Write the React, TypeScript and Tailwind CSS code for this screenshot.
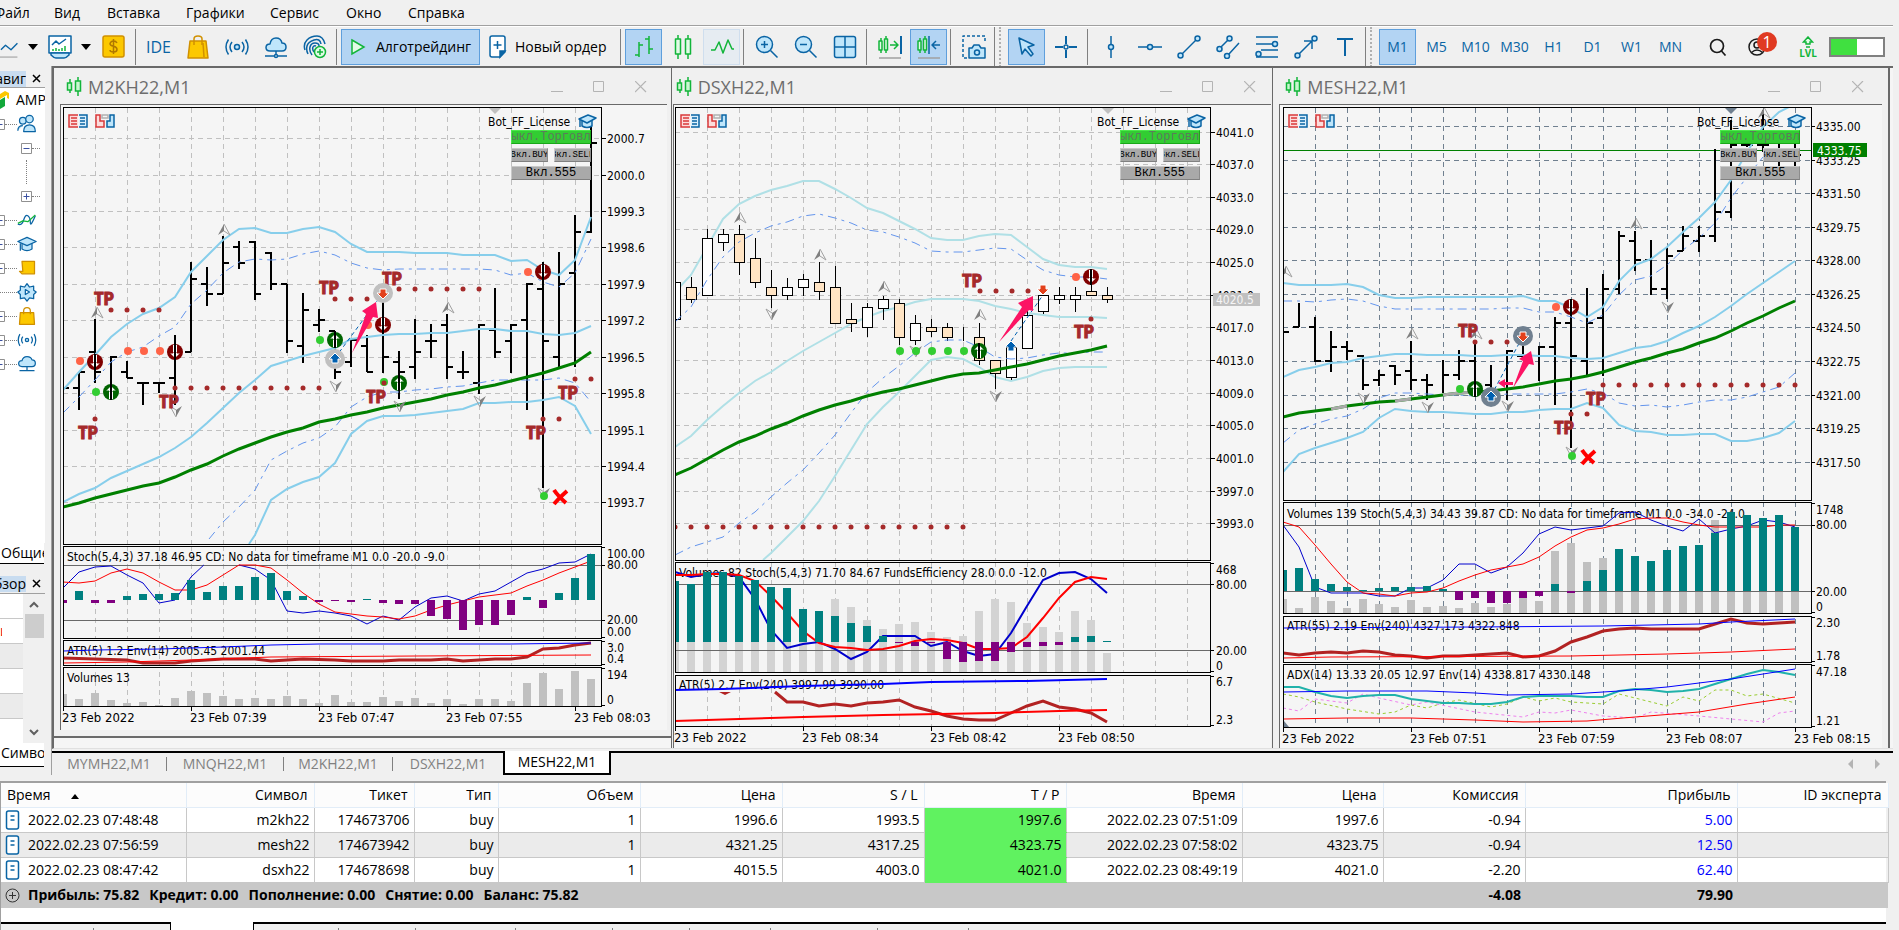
import React from 'react';

const STEP = 16;

type Bar = [i: number, high: number, low: number, open: number | null, close: number | null];
type Candle = [i: number, high: number, low: number, top: number, bottom: number, up: 0 | 1];
type Point = [number, number];

const trace = (x0: number, ys: number[], from = 0) =>
  ys.map((y, k) => `${x0 + (from + k) * STEP},${y}`).join(' ');

const pairs = (x0: number, pts: Point[]) => pts.map(([i, y]) => `${x0 + i * STEP},${y}`).join(' ');

const range = (from: number, to: number, step: number) => {
  const out: number[] = [];
  for (let v = from; v <= to; v += step) out.push(v);
  return out;
};

const chartFont = "font-['DejaVu_Sans_Condensed','Noto_Sans',sans-serif]";

/* ---------- chart primitives ---------- */

const Line = ({ points, color, width = 1, dash }: { points: string; color: string; width?: number; dash?: string }) => (
  <polyline points={points} fill="none" stroke={color} strokeWidth={width} strokeDasharray={dash} />
);

const Panel = ({ x, right, top, bottom }: { x: number; right: number; top: number; bottom: number }) => (
  <rect x={x} y={top} width={right - x} height={bottom - top} fill="none" stroke="#000" shapeRendering="crispEdges" />
);

const Grid = ({ xs, ys = [], left, right, top, bottom, color }: { xs: number[]; ys?: number[]; left: number; right: number; top: number; bottom: number; color: string }) => (
  <g stroke={color} strokeDasharray="5 4" shapeRendering="crispEdges">
    {xs.map((x) => <path key={x} d={`M${x} ${top}V${bottom}`} />)}
    {ys.map((y) => <path key={y} d={`M${left} ${y}H${right}`} />)}
  </g>
);

const Label = ({ x, y, fill = '#000', size = 12, children }: { x: number; y: number; fill?: string; size?: number; children: React.ReactNode }) => (
  <text x={x} y={y} fill={fill} fontSize={size}>{children}</text>
);

const PriceScale = ({ x, ys, labels }: { x: number; ys: number[]; labels: string[] }) => (
  <g>
    {ys.map((y, k) => (
      <g key={y}>
        <path d={`M${x} ${y}h4`} stroke="#000" shapeRendering="crispEdges" />
        <Label x={x + 5} y={y + 5}>{labels[k]}</Label>
      </g>
    ))}
  </g>
);

const TimeScale = ({ y, labels }: { y: number; labels: [number, string][] }) => (
  <g>
    {labels.map(([x, t]) => (
      <g key={t}>
        <path d={`M${x} ${y}v5`} stroke="#000" shapeRendering="crispEdges" />
        <Label x={x - 1} y={y + 16} size={13}>{t}</Label>
      </g>
    ))}
  </g>
);

const Bars = ({ x0, data }: { x0: number; data: Bar[] }) => (
  <g stroke="#000" strokeWidth="2" shapeRendering="crispEdges">
    {data.map(([i, h, l, o, c]) => {
      const x = x0 + i * STEP;
      return <path key={i} d={`M${x} ${h}V${l}${o ? `M${x} ${o}h-6` : ''}${c ? `M${x} ${c}h6` : ''}`} />;
    })}
  </g>
);

const Candles = ({ x0, data }: { x0: number; data: Candle[] }) => (
  <g stroke="#000" shapeRendering="crispEdges">
    {data.map(([i, h, l, t, b, up]) => (
      <g key={i}>
        <path d={`M${x0 + i * STEP} ${h}V${l}`} />
        <rect x={x0 + i * STEP - 5} y={t} width="10" height={b - t} fill={up ? '#fff' : '#ffe4c4'} />
      </g>
    ))}
  </g>
);

const Histogram = ({ x0, zero, ys }: { x0: number; zero: number; ys: number[] }) => (
  <g>
    {ys.map((y, i) => (
      <rect key={i} x={x0 + i * STEP - 4} y={Math.min(y, zero)} width="8" height={Math.max(1, Math.abs(y - zero))} fill={y < zero ? '#008080' : '#800080'} />
    ))}
  </g>
);

const Volumes = ({ x0, base, ys, color }: { x0: number; base: number; ys: number[]; color: string }) => (
  <g fill={color}>
    {ys.map((y, i) => <rect key={i} x={x0 + i * STEP - 4} y={y} width="8" height={base - y} />)}
  </g>
);

const Dots = ({ at, color, r }: { at: Point[]; color: string; r: number }) => (
  <g fill={color}>
    {at.map(([x, y]) => <circle key={`${x}-${y}`} cx={x} cy={y} r={r} />)}
  </g>
);

const dotRow = (from: number, to: number, y: number): Point[] => range(from, to, STEP).map((x) => [x, y]);

const FractalUp = ({ at }: { at: Point[] }) => (
  <g>
    {at.map(([x, y]) => (
      <g key={`${x}-${y}`}>
        <path d={`M${x} ${y - 5}L${x - 6} ${y + 6}L${x} ${y + 2}Z`} fill="#808080" />
        <path d={`M${x} ${y - 5}L${x + 6} ${y + 6}L${x} ${y + 2}`} fill="none" stroke="#a0a0a0" />
      </g>
    ))}
  </g>
);

const FractalDown = ({ at }: { at: Point[] }) => (
  <g>
    {at.map(([x, y]) => (
      <g key={`${x}-${y}`}>
        <path d={`M${x} ${y + 5}L${x + 6} ${y - 6}L${x} ${y - 2}Z`} fill="#808080" />
        <path d={`M${x} ${y + 5}L${x - 6} ${y - 6}L${x} ${y - 2}`} fill="none" stroke="#a0a0a0" />
      </g>
    ))}
  </g>
);

const Signal = ({ x, y, sell }: { x: number; y: number; sell?: boolean }) => (
  <g>
    <circle cx={x} cy={y} r="8" fill={sell ? '#800000' : '#006400'} />
    <path
      d={sell ? `M${x - 2} ${y - 7}v8h-3l5 5l5-5h-3v-8Z` : `M${x - 2} ${y + 7}v-8h-3l5-5l5 5h-3v8Z`}
      fill="#fff"
    />
    <path d={`M${x} ${y - 8}V${y + 8}`} stroke="#000" strokeWidth="2" />
    <path
      d={sell ? `M${x - 5} ${y + 1}h3v-1M${x + 5} ${y + 1}h-3v-1` : `M${x - 5} ${y - 1}h3v1M${x + 5} ${y - 1}h-3v1`}
      stroke={sell ? '#800000' : '#006400'}
      fill="none"
    />
  </g>
);

const Deal = ({ x, y, sell, ring }: { x: number; y: number; sell?: boolean; ring?: string }) => (
  <g>
    {ring && <circle cx={x} cy={y} r="10" fill={ring} />}
    <path
      d={sell ? `M${x} ${y + 6}L${x - 6} ${y}h3v-4h6v4h3Z` : `M${x} ${y - 6}L${x - 6} ${y}h3v4h6v-4h3Z`}
      fill={sell ? '#e2401b' : '#0060b0'}
      stroke="#fff"
    />
  </g>
);

const TakeProfit = ({ at }: { at: Point[] }) => (
  <g className="font-['Roboto_Condensed','Liberation_Sans_Narrow','Open_Sans_Condensed',Roboto,sans-serif]" fill="#a52a2a" stroke="#a52a2a" fontSize="18" fontWeight="700">
    {at.map(([x, y]) => <text key={`${x}-${y}`} x={x - 1} y={y}>TP</text>)}
  </g>
);

const Cross = ({ x, y }: { x: number; y: number }) => (
  <path d={`M${x - 6} ${y - 7}Q${x - 2} ${y - 1} ${x + 6} ${y + 6}M${x + 7} ${y - 6}Q${x} ${y} ${x - 6} ${y + 7}`} stroke="#f00" strokeWidth="4" fill="none" />
);

const CapIcon = ({ x, y }: { x: number; y: number }) => (
  <g transform={`translate(${x} ${y})`} stroke="#0a64a4" fill="#bfe6fb" strokeWidth="1.5" strokeLinejoin="round">
    <path d="M-5 -1v6q5 3 10 0v-6" />
    <path d="M-8 -2L1 -6l8 3l-9 5Z" />
    <path d="M-7 -1v7" />
  </g>
);

const ChartTools = ({ x }: { x: number }) => (
  <g fill="none" strokeWidth="1.5">
    <path d={`M${x + 9} 115h-9v12h9`} stroke="#d9383a" fill="#fcdcdc" />
    <path d={`M${x + 2} 118h6m-6 3h6m-6 3h6`} stroke="#d9383a" />
    <path d={`M${x + 10} 115h8v12h-8`} stroke="#0a64a4" fill="#dcf0fc" />
    <path d={`M${x + 11} 118h5m-5 3h5m-5 3h5`} stroke="#0a64a4" />
    <path d={`M${x + 27} 115h4v6h4v6h-8Z`} stroke="#d9383a" fill="#fcdcdc" />
    <path d={`M${x + 45} 115h-4v6h-3v6h7Z`} stroke="#0a64a4" fill="#bfe6fb" />
    <path d={`M${x + 33} 118v-3h6v3Z`} stroke="#b0b0b0" />
  </g>
);

const Headline = ({ x }: { x: number }) => (
  <g>
    <Label x={x} y={126}>Bot_FF_License</Label>
    <CapIcon x={x + 99} y={121} />
  </g>
);

/* ---------- M2KH22 ---------- */

const m2kBars: Bar[] = [
  [1, 372, 410, 388, 372], [2, 319, 383, 352, 372], [3, 356, 399, null, 357], [4, 361, 378, 372, 378],
  [5, 383, 405, 383, 383], [6, 383, 393, 383, 383], [7, 335, 405, 378, 352], [8, 262, 352, 352, 279],
  [9, 267, 306, 284, 294], [10, 236, 294, 294, 263], [11, 241, 269, 247, 263], [12, 241, 300, 242, 294],
  [13, 252, 290, 253, 284], [14, 284, 353, 284, 341], [15, 293, 363, 346, 310], [16, 309, 332, 325, 320],
  [17, 331, 379, 331, 372], [18, 339, 367, 362, 340], [19, 335, 372, 346, 372], [20, 293, 373, null, 357],
  [21, 351, 399, 362, 372], [22, 319, 379, 367, 352], [23, 324, 358, 341, 341], [24, 314, 379, 325, 367],
  [25, 351, 379, 372, 372], [26, 324, 394, 383, 325], [27, 288, 358, 330, 352], [28, 324, 373, 341, 325],
  [29, 283, 410, 320, 284], [30, 262, 488, 289, 341], [31, 252, 368, 357, 284], [32, 215, 367, 273, 232],
  [33, 126, 233, 232, 143],
];

const m2k = {
  upper: [390, 372, 355, 337, 324, 314, 308, 297, 272, 256, 240, 229, 228, 233, 233, 229, 227, 232, 244, 252, 252, 252, 253, 253, 253, 255, 255, 255, 261, 260, 270, 275, 260, 217],
  middle: [502, 494, 488, 478, 471, 464, 457, 448, 437, 423, 408, 393, 380, 366, 361, 356, 352, 348, 339, 337, 335, 334, 334, 333, 333, 331, 329, 329, 331, 331, 334, 335, 333, 326],
  lower: [535, 500, 489, 482, 477, 463, 434, 421, 416, 416, 415, 413, 411, 409, 403, 403, 402, 402, 400, 397, 406, 434],
  dashUpper: [413, 397, 380, 362, 352, 347, 336, 327, 304, 290, 273, 262, 259, 260, 259, 254, 251, 255, 263, 268, 270, 269, 269, 269, 269, 269, 269, 270, 275, 273, 282, 287, 273, 239],
  dashLower: [522, 507, 490, 460, 451, 443, 438, 427, 407, 397, 392, 392, 390, 389, 387, 386, 383, 380, 380, 380, 380, 378, 383, 402],
  trend: [507, 503, 498, 494, 490, 486, 483, 477, 470, 464, 456, 449, 443, 437, 432, 428, 422, 419, 415, 412, 408, 405, 402, 399, 395, 392, 388, 385, 381, 377, 373, 368, 363, 352],
  hist: [603, 591, 603, 603, 596, 594, 594, 593, 580, 592, 586, 586, 577, 573, 591, 596, 602, 601, 602, 599, 603, 604, 604, 616, 619, 630, 625, 625, 615, 597, 608, 593, 578, 554],
  stochRed: [582, 583, 581, 573, 569, 573, 582, 590, 590, 585, 575, 565, 565, 568, 580, 593, 604, 612, 614, 616, 617, 619, 616, 610, 605, 601, 597, 595, 593, 586, 580, 573, 567, 561],
  volume: [694, 699, 693, 700, 703, 702, 705, 698, 691, 693, 696, 699, 698, 699, 696, 699, 703, 695, 702, 702, 697, 701, 698, 703, 699, 704, 699, 699, 701, 683, 673, 689, 671, 679],
};

const M2kChart = () => {
  const x0 = 63;
  const xs = range(95, 575, 32);
  const ys = [138, 175, 211, 247, 284, 320, 357, 393, 430, 466, 502];
  return (
    <svg viewBox="61 105 604 625" width="604" height="625" className={chartFont}>
      <clipPath id="m2k-clip"><path d="M63 107h539v600h-539Z" /></clipPath>
      <g clipPath="url(#m2k-clip)">
        <Grid xs={xs} ys={ys} left={63} right={601} top={108} bottom={544} color="#c0c0c0" />
        <path d="M489 108h12l-6 6Z" fill="#c0c0c0" />
        <Bars x0={x0} data={m2kBars} />
        <path d="M64 388h5" stroke="#000" strokeWidth="2" />
        <Line points={trace(x0, m2k.upper)} color="#87ceeb" width={2} />
        <Line points={trace(x0, m2k.middle)} color="#87ceeb" width={2} />
        <Line points={`249,544 ${trace(x0, m2k.lower, 12)}`} color="#87ceeb" width={2} />
        <Line points={trace(x0, m2k.dashUpper)} color="#6495ed" dash="9 5 3 5" />
        <Line points={`209,539 ${trace(x0, m2k.dashLower, 10)}`} color="#6495ed" dash="9 5 3 5" />
        <Line points={trace(x0, m2k.trend)} color="#008000" width={3} />

        <FractalUp at={[[97, 312], [224, 229], [448, 307]]} />
        <FractalDown at={[[176, 412], [336, 387], [400, 407], [480, 402], [544, 494]]} />
        <Dots at={[[80, 361], ...dotRow(128, 160, 351), [528, 272], [368, 325]]} color="#ff6347" r={4} />
        <Dots at={[[96, 392], [320, 340], [384, 382], [544, 496]]} color="#32cd32" r={4} />
        <Signal x={95} y={362} sell />
        <Signal x={175} y={352} sell />
        <Signal x={383} y={325} sell />
        <Signal x={543} y={272} sell />
        <Signal x={111} y={392} />
        <Signal x={335} y={340} />
        <Signal x={399} y={383} />
        <Dots
          at={[...dotRow(111, 159, 310), ...dotRow(175, 319, 388), ...dotRow(335, 367, 299), ...dotRow(399, 479, 289), [95, 419], [384, 383], [575, 379], [591, 379], [543, 419], [559, 419]]}
          color="#a52a2a"
          r={2.5}
        />
        <TakeProfit at={[[95, 305], [320, 294], [160, 408], [79, 439], [383, 285], [367, 403], [527, 439], [559, 399]]} />
        <path d="M335 358L383 293" stroke="#0060b0" strokeDasharray="4 3" />
        <Deal x={335} y={359} ring="#c0c0c0" />
        <Deal x={383} y={293} sell ring="#c0c0c0" />
        <path d="M352 353L366 314L362 311L376 302L378 318L373 317Z" fill="#fc1464" />
        <Cross x={560} y={497} />
        <ChartTools x={69} />
        <Headline x={488} />

        <Grid xs={xs} left={63} right={601} top={546} bottom={706} color="#c0c0c0" />
        <path d="M63 565H601M63 620H601" stroke="#696969" shapeRendering="crispEdges" />
        <Label x={67} y={561}>Stoch(5,4,3) 37.18 46.95 CD: No data for timeframe M1 0.0 -20.0 -9.0</Label>
        <Line points={pairs(x0, [[0, 588], [1, 572], [2, 567], [3, 566], [4, 575], [5, 583], [6, 603], [7, 600], [8, 577], [8.8, 565]])} color="#0000cd" />
        <Line
          points={trace(x0, [565, 569, 580, 611, 613, 611, 613, 616, 624, 616, 620, 607, 598, 596, 601, 594, 591, 582, 573, 569, 563, 562, 554], 11)}
          color="#0000cd"
        />
        <Line points={trace(x0, m2k.stochRed)} color="#f00" />
        <Histogram x0={x0} zero={600} ys={m2k.hist} />

        <rect x="63" y="638" width="538" height="3" fill="#f5f5f5" />
        <Label x={67} y={655}>ATR(5) 1.2 Env(14) 2005.45 2001.44</Label>
        <Line
          points={pairs(x0, [[0, 658], [2, 659], [4, 660], [5, 663], [7, 663], [8, 661], [10, 659], [12, 659], [13, 661], [15, 659], [17, 660], [18, 661], [20, 661], [21, 660], [23, 660], [24, 659], [25, 661], [27, 659], [28, 659], [29, 657], [30, 649], [31, 648], [32, 645], [33, 643]])}
          color="#b22222"
          width={3}
        />
        <Line points={pairs(x0, [[0, 651], [2, 650], [6, 649], [10, 647], [13, 645], [16, 644], [28, 644], [33, 643]])} color="#00f" width={1} />
        <Line points={pairs(x0, [[0, 663], [4, 662], [8, 660], [13, 657], [22, 656], [33, 655]])} color="#f00" width={1} />

        <rect x="63" y="665" width="538" height="3" fill="#f5f5f5" />
        <Label x={67} y={682}>Volumes 13</Label>
        <Volumes x0={x0} base={706} ys={m2k.volume} color="#c0c0c0" />
      </g>
      <Panel x={63} right={601} top={107} bottom={544} />
      <Panel x={63} right={601} top={546} bottom={638} />
      <Panel x={63} right={601} top={640} bottom={665} />
      <Panel x={63} right={601} top={667} bottom={706} />
      <PriceScale x={602} ys={ys} labels={['2000.7', '2000.0', '1999.3', '1998.6', '1997.9', '1997.2', '1996.5', '1995.8', '1995.1', '1994.4', '1993.7']} />
      <Label x={607} y={558}>100.00</Label>
      <Label x={607} y={569}>80.00</Label>
      <Label x={607} y={624}>20.00</Label>
      <Label x={607} y={636}>0.00</Label>
      <Label x={607} y={652}>3.0</Label>
      <Label x={607} y={663}>0.4</Label>
      <Label x={607} y={679}>194</Label>
      <Label x={607} y={704}>0</Label>
      <path d="M602 547h3m-3 18h3m-3 55h3m-3 17h3m-3 4h3m-3 23h3m-3 4h3m-3 37h3" stroke="#000" shapeRendering="crispEdges" />
      <TimeScale y={706} labels={[[63, '23 Feb 2022'], [191, '23 Feb 07:39'], [319, '23 Feb 07:47'], [447, '23 Feb 07:55'], [575, '23 Feb 08:03']]} />
    </svg>
  );
};

/* ---------- DSXH22 ---------- */

const dsxCandles: Candle[] = [
  [0, 282, 319, 282, 319, 1], [1, 277, 303, 287, 299, 0], [2, 229, 295, 238, 295, 1], [3, 229, 251, 234, 242, 1],
  [4, 225, 275, 234, 262, 0], [5, 238, 288, 258, 282, 0], [6, 270, 308, 287, 295, 0], [7, 278, 300, 287, 295, 1],
  [8, 274, 296, 279, 287, 1], [9, 262, 300, 282, 291, 0], [10, 266, 323, 287, 323, 0], [11, 303, 332, 319, 323, 0],
  [12, 303, 337, 307, 327, 1], [13, 296, 320, 299, 308, 1], [14, 299, 345, 303, 337, 0], [15, 315, 345, 323, 340, 1],
  [16, 319, 337, 327, 331, 0], [17, 323, 341, 327, 337, 0], [18, 327, 341, 336, 336, 0], [19, 323, 365, 337, 360, 0],
  [20, 360, 389, 360, 373, 0], [21, 344, 380, 347, 377, 1], [22, 308, 348, 315, 348, 1], [23, 295, 314, 295, 311, 1],
  [24, 287, 304, 295, 299, 1], [25, 287, 312, 295, 299, 1], [26, 270, 295, 291, 295, 0], [27, 287, 303, 295, 299, 0],
];

const dsx = {
  upper: [292, 275, 247, 219, 204, 196, 190, 186, 181, 181, 189, 198, 208, 213, 221, 229, 238, 240, 240, 236, 234, 235, 247, 259, 265, 267, 267, 269],
  middle: [447, 436, 420, 406, 393, 381, 372, 361, 351, 342, 333, 324, 317, 311, 307, 302, 299, 299, 299, 301, 306, 309, 313, 315, 317, 317, 317, 318],
  lower: [553, 537, 521, 501, 476, 450, 424, 407, 392, 376, 360, 357, 359, 367, 377, 381, 377, 371, 368, 367, 367, 367],
  dashUpper: [322, 307, 280, 257, 242, 233, 226, 222, 216, 214, 218, 223, 230, 232, 237, 243, 251, 252, 252, 250, 248, 249, 260, 270, 275, 277, 277, 279],
  dashLower: [555, 547, 542, 537, 523, 512, 497, 483, 470, 453, 435, 413, 392, 378, 366, 353, 342, 340, 340, 347, 357, 359, 358, 355, 353, 353, 352, 352],
  trend: [475, 468, 459, 450, 442, 436, 429, 423, 416, 410, 405, 401, 396, 392, 389, 385, 381, 377, 374, 373, 370, 367, 364, 360, 356, 353, 350, 346],
  volume: [642, 642, 642, 642, 642, 642, 642, 642, 642, 642, 599, 607, 620, 629, 624, 622, 632, 637, 636, 611, 599, 602, 623, 627, 632, 611, 620, 653],
  hist: [581, 584, 572, 572, 576, 580, 587, 588, 609, 611, 616, 623, 626, 636, 643, 646, 643, 659, 662, 661, 661, 652, 647, 646, 645, 637, 636, 641],
  stochBlue: [572, 577, 574, 573, 577, 599, 630, 648, 644, 642, 649, 659, 652, 636, 636, 636, 646, 642, 651, 656, 654, 633, 606, 580, 573, 572, 579, 593],
  stochRed: [575, 575, 574, 574, 575, 581, 596, 613, 631, 643, 647, 648, 650, 649, 646, 641, 639, 640, 643, 649, 649, 648, 637, 618, 598, 582, 577, 579],
  atr: [702, 702, 706, 704, 706, 703, 702, 700, 707, 711, 716, 719, 720, 720, 713, 706, 701, 707, 709, 713, 722],
};

const DsxChart = () => {
  const x0 = 674;
  const xs = range(706, 1186, 32);
  const ys = [132, 164, 197, 229, 262, 295, 327, 360, 393, 425, 458, 491, 523];
  return (
    <svg viewBox="673 105 598 643" width="598" height="643" className={chartFont}>
      <clipPath id="dsx-clip"><path d="M674 107h536v620h-536Z" /></clipPath>
      <g clipPath="url(#dsx-clip)">
        <Grid xs={xs} ys={ys} left={674} right={1209} top={108} bottom={560} color="#c0c0c0" />
        <path d="M674 299H1209" stroke="#c0c0c0" shapeRendering="crispEdges" />
        <path d="M1101 108h12l-6 6Z" fill="#c0c0c0" />
        <Line points={trace(x0, dsx.upper)} color="#b0e0e6" width={2} />
        <Line points={trace(x0, dsx.middle)} color="#b0e0e6" width={2} />
        <Line points={`762,560 ${trace(x0, dsx.lower, 6)}`} color="#b0e0e6" width={2} />
        <Candles x0={x0} data={dsxCandles} />
        <Line points={trace(x0, dsx.dashUpper)} color="#6495ed" dash="9 5 3 5" />
        <Line points={trace(x0, dsx.dashLower)} color="#6495ed" dash="9 5 3 5" />
        <Line points={trace(x0, dsx.trend)} color="#008000" width={3} />

        <FractalUp at={[[739, 217], [819, 254], [883, 286], [979, 314]]} />
        <FractalDown at={[[771, 315], [995, 397], [915, 352]]} />
        <Dots at={dotRow(899, 963, 351)} color="#32cd32" r={4} />
        <Signal x={978} y={351} />
        <Dots at={[[1075, 277]]} color="#ff6347" r={4} />
        <Signal x={1090} y={277} sell />
        <Dots at={[...dotRow(674, 962, 527), ...dotRow(979, 1027, 291), [1090, 319]]} color="#a52a2a" r={2.5} />
        <TakeProfit at={[[962, 287], [1074, 338]]} />
        <path d="M1010 341L1042 295" stroke="#0060b0" strokeDasharray="4 3" />
        <Deal x={1042} y={289} sell />
        <Deal x={1010} y={347} />
        <path d="M998 342L1021 307L1017 303L1032 296L1032 311L1028 310Z" fill="#fc1464" />
        <ChartTools x={680} />
        <Headline x={1096} />

        <Grid xs={xs} left={674} right={1209} top={562} bottom={726} color="#c0c0c0" />
        <Volumes x0={x0} base={672} ys={dsx.volume} color="#d3d3d3" />
        <path d="M674 584H1209M674 650H1209" stroke="#696969" shapeRendering="crispEdges" />
        <Label x={678} y={577}>Volumes 82 Stoch(5,4,3) 71.70 84.67 FundsEfficiency 28.0 0.0 -12.0</Label>
        <Line points={trace(x0, dsx.stochBlue)} color="#0000cd" width={2} />
        <Line points={trace(x0, dsx.stochRed)} color="#f00" width={2} />
        <Histogram x0={x0} zero={642} ys={dsx.hist} />

        <rect x="674" y="672" width="535" height="3" fill="#f5f5f5" />
        <Label x={678} y={689}>ATR(5) 2.7 Env(240) 3997.99 3990.00</Label>
        <Line points={`774,692 ${trace(x0, dsx.atr, 7)}`} color="#b22222" width={3} />
        <path d="M718 692h12l-6 3Z" fill="#b22222" />
        <Line points={pairs(x0, [[0, 690], [3, 689], [8, 686], [13, 684], [16, 682], [22, 681], [27, 679]])} color="#00f" width={2} />
        <Line points={pairs(x0, [[0, 721], [4, 719], [8, 717], [13, 715], [20, 713], [24, 711], [27, 710]])} color="#f00" width={2} />
      </g>
      <Panel x={674} right={1209} top={107} bottom={560} />
      <Panel x={674} right={1209} top={562} bottom={672} />
      <Panel x={674} right={1209} top={675} bottom={726} />
      <PriceScale x={1210} ys={ys} labels={['4041.0', '4037.0', '4033.0', '4029.0', '4025.0', '4021.0', '4017.0', '4013.0', '4009.0', '4005.0', '4001.0', '3997.0', '3993.0']} />
      <rect x="1212" y="293" width="47" height="13" fill="#c0c0c0" />
      <Label x={1215} y={304} fill="#f5f5f5">4020.5</Label>
      <Label x={1215} y={574}>468</Label>
      <Label x={1215} y={589}>80.00</Label>
      <Label x={1215} y={655}>20.00</Label>
      <Label x={1215} y={670}>0</Label>
      <Label x={1215} y={686}>6.7</Label>
      <Label x={1215} y={724}>2.3</Label>
      <path d="M1210 563h3m-3 21h3m-3 66h3m-3 21h3m-3 5h3m-3 49h3" stroke="#000" shapeRendering="crispEdges" />
      <TimeScale y={726} labels={[[674, '23 Feb 2022'], [802, '23 Feb 08:34'], [930, '23 Feb 08:42'], [1058, '23 Feb 08:50']]} />
    </svg>
  );
};

/* ---------- MESH22 ---------- */

const mesBars: Bar[] = [
  [1, 303, 327, 327, null], [2, 317, 362, 327, 361], [3, 331, 372, 361, 347], [4, 341, 360, 347, 351],
  [5, 355, 390, 356, 385], [6, 370, 386, 380, 375], [7, 365, 385, 366, 375], [8, 341, 390, 371, 380],
  [9, 374, 400, 380, 385], [10, 360, 393, null, 375], [11, 350, 380, 375, 361], [12, 343, 390, 361, 385],
  [13, 365, 392, 385, null], [14, 350, 400, null, 351], [15, 346, 356, 356, null], [16, 346, 381, null, 347],
  [17, 317, 405, 347, 323], [18, 302, 448, 323, 356], [19, 288, 376, 361, 323], [20, 274, 376, 318, 289],
  [21, 231, 294, 289, 236], [22, 231, 271, 241, 260], [23, 240, 295, 260, 289], [24, 248, 299, 289, 256],
  [25, 226, 251, 251, 236], [26, 226, 252, 241, 236], [27, 149, 242, 236, 212], [28, 120, 218, 212, 145],
  [29, 143, 147, 145, 145], [30, 110, 152, 145, 145], [31, 143, 166, null, null], [32, 143, 166, null, 155],
];

const mes = {
  upper: [283, 285, 285, 285, 284, 287, 295, 298, 298, 297, 297, 297, 297, 297, 297, 296, 301, 301, 308, 317, 307, 281, 265, 259, 247, 232, 218, 202, 180, 152, 127, 112, 104],
  middle: [377, 370, 367, 363, 362, 358, 356, 354, 354, 355, 355, 355, 356, 356, 355, 355, 356, 356, 358, 359, 358, 353, 348, 346, 341, 333, 326, 317, 306, 294, 283, 272, 261],
  lower: [472, 454, 448, 443, 438, 432, 418, 409, 411, 412, 412, 413, 414, 414, 412, 412, 410, 409, 409, 403, 408, 425, 431, 432, 435, 435, 434, 434, 441, 441, 438, 433, 421],
  dashUpper: [301, 301, 302, 300, 299, 301, 306, 309, 309, 309, 309, 309, 309, 309, 308, 308, 312, 312, 317, 323, 315, 295, 280, 276, 265, 250, 238, 223, 198, 177, 157],
  dashLower: [443, 430, 424, 419, 416, 409, 398, 393, 393, 394, 395, 395, 396, 396, 394, 394, 394, 394, 392, 389, 393, 403, 406, 405, 407, 405, 402, 400, 400, 397, 392, 387, 373],
  trend: [417, 413, 411, 409, 406, 404, 402, 401, 399, 397, 395, 393, 392, 391, 389, 387, 384, 381, 379, 376, 372, 367, 362, 358, 353, 349, 343, 338, 331, 323, 316, 308, 301],
  volume: [599, 608, 597, 601, 608, 599, 604, 607, 600, 607, 606, 608, 603, 607, 604, 598, 601, 551, 543, 562, 558, 591, 591, 591, 591, 591, 591, 520, 591, 591, 591, 591, 591],
  hist: [570, 568, 579, 584, 587, 590, 588, 587, 587, 586, 589, 600, 598, 603, 603, 598, 596, 584, 593, 581, 570, 549, 556, 561, 550, 546, 545, 533, 512, 515, 518, 515, 527],
  stochBlue: [525, 547, 587, 593, 593, 593, 596, 596, 588, 588, 580, 564, 564, 573, 567, 553, 534, 527, 530, 528, 526, 513, 512, 520, 526, 531, 519, 533, 529, 526, 520, 522, 527],
  stochRed: [522, 527, 545, 564, 582, 593, 594, 596, 593, 592, 588, 581, 575, 570, 567, 564, 557, 546, 537, 530, 528, 524, 519, 518, 518, 522, 525, 527, 527, 527, 527, 525, 525],
  atr: [653, 655, 653, 652, 653, 651, 652, 655, 656, 658, 656, 656, 655, 654, 653, 657, 656, 651, 642, 637, 631, 629, 628, 629, 629, 629, 629, 624, 619, 623, 624, 623, 622],
  adx: [687, 687, 692, 696, 698, 696, 695, 695, 699, 701, 703, 703, 704, 704, 702, 697, 696, 696, 696, 697, 697, 691, 689, 690, 692, 691, 689, 684, 679, 674, 670, 672, 675],
};

const MesChart = () => {
  const x0 = 1283;
  const xs = range(1315, 1795, 32);
  const ys = [126, 160, 193, 227, 260, 294, 327, 361, 395, 428, 462];
  return (
    <svg viewBox="1280 105 604 643" width="604" height="643" className={chartFont}>
      <clipPath id="mes-clip"><path d="M1283 107h529v621h-529Z" /></clipPath>
      <g clipPath="url(#mes-clip)">
        <Grid xs={xs} ys={ys} left={1283} right={1811} top={108} bottom={500} color="#708090" />
        <path d="M1283 150H1811" stroke="#008000" shapeRendering="crispEdges" />
        <path d="M1725 108h12l-6 6Z" fill="#708090" />
        <Bars x0={x0} data={mesBars} />
        <path d="M1284 332h5" stroke="#000" strokeWidth="2" />
        <Line points={trace(x0, mes.upper)} color="#87ceeb" width={2} />
        <Line points={trace(x0, mes.middle)} color="#87ceeb" width={2} />
        <Line points={trace(x0, mes.lower)} color="#87ceeb" width={2} />
        <Line points={trace(x0, mes.dashUpper)} color="#6495ed" dash="9 5 3 5" />
        <Line points={trace(x0, mes.dashLower)} color="#6495ed" dash="9 5 3 5" />
        <Line points={trace(x0, mes.trend)} color="#008000" width={3} />
        <Line points={trace(x0, mes.trend.slice(3, 5), 3)} color="#a9a9a9" width={3} />
        <Line points={trace(x0, mes.trend.slice(7, 9), 7)} color="#a9a9a9" width={3} />
        <Line points={trace(x0, mes.trend.slice(10, 13), 10)} color="#a9a9a9" width={3} />

        <FractalUp at={[[1286, 271], [1412, 333], [1476, 333], [1636, 223], [1764, 112]]} />
        <FractalDown at={[[1364, 399], [1428, 408], [1508, 407], [1668, 308], [1572, 453]]} />
        <Dots at={[[1556, 307]]} color="#ff6347" r={4} />
        <Dots at={[[1460, 389], [1572, 456]]} color="#32cd32" r={4} />
        <Signal x={1571} y={307} sell />
        <Signal x={1475} y={389} />
        <Dots at={[...dotRow(1603, 1795, 385), ...dotRow(1475, 1507, 342), [1571, 414], [1587, 414]]} color="#a52a2a" r={2.5} />
        <TakeProfit at={[[1459, 337], [1587, 405], [1555, 434]]} />
        <path d="M1491 396L1523 336" stroke="#0060b0" strokeDasharray="4 3" />
        <Deal x={1523} y={336} sell ring="#708090" />
        <Deal x={1491} y={397} ring="#708090" />
        <path d="M1513 388L1523 361L1519 359L1531 351L1534 365L1529 364Z" fill="#fc1464" />
        <path d="M1498 383l7-4v3h8v3h-8v3Z" fill="#fc1464" />
        <Cross x={1588} y={457} />
        <ChartTools x={1289} />
        <Headline x={1697} />

        <Grid xs={xs} left={1283} right={1811} top={502} bottom={727} color="#708090" />
        <Volumes x0={x0} base={613} ys={mes.volume} color="#c0c0c0" />
        <path d="M1283 525H1811M1283 591H1811" stroke="#696969" shapeRendering="crispEdges" />
        <Label x={1287} y={518}>Volumes 139 Stoch(5,4,3) 34.43 39.87 CD: No data for timeframe M1 0.0 -34.0 -24.0</Label>
        <Line points={trace(x0, mes.stochBlue)} color="#0000cd" />
        <Line points={trace(x0, mes.stochRed)} color="#f00" />
        <Histogram x0={x0} zero={591} ys={mes.hist} />

        <rect x="1283" y="613" width="528" height="3" fill="#f5f5f5" />
        <Label x={1287} y={630}>ATR(55) 2.19 Env(240) 4327.173 4322.848</Label>
        <Line points={trace(x0, mes.atr)} color="#b22222" width={3} />
        <Line points={pairs(x0, [[0, 628], [12, 627], [20, 626], [26, 624], [28, 622], [32, 619]])} color="#00f" />
        <Line points={pairs(x0, [[0, 658], [3, 657], [18, 656], [24, 654], [28, 652], [32, 649]])} color="#f00" />

        <rect x="1283" y="662" width="528" height="2" fill="#f5f5f5" />
        <Label x={1287} y={679}>ADX(14) 13.33 20.05 12.97 Env(14) 4338.817 4330.148</Label>
        <Line
          points={pairs(x0, [[0, 694], [1, 697], [2, 702], [4, 709], [6, 714], [7, 712], [8, 705], [9, 708], [10, 703], [11, 700], [13, 707], [14, 704], [15, 697], [16, 701], [17, 698], [18, 702], [20, 704], [21, 694], [23, 702], [24, 706], [25, 697], [26, 701], [27, 690], [28, 690], [29, 696], [30, 694], [32, 703]])}
          color="#9acd32"
          dash="3 3"
        />
        <Line
          points={pairs(x0, [[0, 708], [1, 711], [2, 699], [4, 703], [5, 694], [6, 698], [8, 705], [9, 702], [12, 712], [15, 717], [16, 712], [17, 713], [18, 710], [20, 716], [22, 718], [23, 712], [26, 716], [30, 722], [31, 713], [32, 711]])}
          color="#ee82ee"
          dash="3 3"
        />
        <Line points={trace(x0, mes.adx)} color="#20b2aa" width={2} />
        <Line points={pairs(x0, [[0, 692], [4, 691], [9, 691], [12, 693], [14, 695], [18, 694], [21, 691], [24, 687], [26, 683], [28, 679], [30, 674], [32, 669]])} color="#00f" />
        <Line points={pairs(x0, [[0, 719], [4, 718], [8, 718], [12, 720], [15, 722], [19, 721], [22, 717], [26, 712], [29, 704], [32, 697]])} color="#f00" />
        <path d="M1284 721l5 6h-5Z" fill="#708090" />
      </g>
      <Panel x={1283} right={1811} top={107} bottom={500} />
      <Panel x={1283} right={1811} top={502} bottom={613} />
      <Panel x={1283} right={1811} top={616} bottom={662} />
      <Panel x={1283} right={1811} top={664} bottom={727} />
      <PriceScale x={1811} ys={ys} labels={['4335.00', '4333.25', '4331.50', '4329.75', '4328.00', '4326.25', '4324.50', '4322.75', '4321.00', '4319.25', '4317.50']} />
      <rect x="1813" y="143" width="54" height="14" fill="#008000" />
      <Label x={1817} y={155} fill="#fff">4333.75</Label>
      <Label x={1816} y={514}>1748</Label>
      <Label x={1816} y={529}>80.00</Label>
      <Label x={1816} y={596}>20.00</Label>
      <Label x={1816} y={611}>0</Label>
      <Label x={1816} y={627}>2.30</Label>
      <Label x={1816} y={660}>1.78</Label>
      <Label x={1816} y={676}>47.18</Label>
      <Label x={1816} y={725}>1.21</Label>
      <path d="M1811 503h4m-4 22h4m-4 66h4m-4 21h4m-4 5h4m-4 44h4m-4 4h4m-4 61h4" stroke="#000" shapeRendering="crispEdges" />
      <TimeScale y={727} labels={[[1283, '23 Feb 2022'], [1411, '23 Feb 07:51'], [1539, '23 Feb 07:59'], [1667, '23 Feb 08:07'], [1795, '23 Feb 08:15']]} />
    </svg>
  );
};

/* ---------- chart windows ---------- */

const CandlesIcon = () => (
  <svg width="16" height="20" viewBox="0 0 16 20" fill="#c8f7cf" stroke="#12b53a" strokeWidth="1.5">
    <path d="M4 2v14M12 0v19" />
    <path d="M1.500 6h4v7h-4ZM9.500 4h5v10h-5Z" />
  </svg>
);

const BotPanel = ({ className }: { className: string }) => {
  const base = 'flex items-center justify-center overflow-hidden whitespace-nowrap border h-3.5';
  const grey = 'bg-[#a9a9a9] border-t-[#c8c8c8] border-l-[#c8c8c8] border-r-[#8c8c8c] border-b-[#808080] text-black';
  return (
    <div className={`absolute top-[25px] grid w-20 grid-cols-2 gap-x-1.5 gap-y-1 font-['Liberation_Mono',monospace] text-xs leading-3 ${className}`}>
      <button className={`${base} col-span-2 bg-[#32cd32] border-t-[#4be84b] border-l-[#4be84b] border-r-[#18a818] border-b-[#18a818] text-[#5c7a5c]`}>Выкл.Торговля</button>
      <button className={`${base} ${grey} text-[9px]`}>Вкл.BUY</button>
      <button className={`${base} ${grey} text-[9px]`}>Вкл.SELL</button>
      <button className={`${base} ${grey} col-span-2`}>Вкл.555</button>
    </div>
  );
};

interface ChartWindowProps {
  title: string;
  frame: string;
  titleBar: string;
  body: string;
  panel: string;
  children: React.ReactNode;
}

const ChartWindow = ({ title, frame, titleBar, body, panel, children }: ChartWindowProps) => (
  <section className={`min-w-0 overflow-hidden bg-[#f0f0f0] ${frame}`}>
    <header className={`flex h-9 items-center gap-1.5 pt-0.5 text-[#6d6d6d] ${titleBar}`}>
      <CandlesIcon />
      <h2 className="flex-1 text-lg leading-6">{title}</h2>
      <div className="flex gap-[30px] pr-4">
        <button aria-label="Свернуть">
          <svg width="12" height="12" viewBox="0 0 12 12" stroke="#b4b4b4"><path d="M0 10.500h12" /></svg>
        </button>
        <button aria-label="Развернуть">
          <svg width="12" height="12" viewBox="0 0 12 12" fill="none" stroke="#b4b4b4"><path d="M.5 .5h10v10H.5Z" /></svg>
        </button>
        <button aria-label="Закрыть">
          <svg width="12" height="12" viewBox="0 0 12 12" stroke="#b4b4b4" strokeWidth="1.200"><path d="M0 0l11 11M11 0L0 11" /></svg>
        </button>
      </div>
    </header>
    <div className={`relative overflow-hidden border-t border-l border-[#696969] bg-[#f5f5f5] ${body}`}>
      {children}
      <BotPanel className={panel} />
    </div>
  </section>
);

/* ---------- toolbar ---------- */

const Glyph = ({ children, size = 24 }: { children: React.ReactNode; size?: number }) => (
  <svg width={size} height={size} viewBox="0 0 24 24" fill="none" stroke="#0a64a4" strokeWidth="1.5" strokeLinejoin="round">
    {children}
  </svg>
);

const ToolButton = ({ label, active, faint, children }: { label: string; active?: boolean; faint?: boolean; children: React.ReactNode }) => (
  <button
    aria-label={label}
    className={`mx-px flex h-9 w-[37px] shrink-0 items-center justify-center border text-sm text-[#0a64a4] ${
      active ? 'border-[#5f9fdc] bg-[#b3d4f3]' : faint ? 'border-[#cfdeee] bg-[#e6ecf2]' : 'border-transparent'
    }`}
  >
    {children}
  </button>
);

const Sep = () => <span className="mr-[3px] ml-0.5 h-9 w-px shrink-0 bg-[#808080]" />;

const Grip = () => (
  <span className="flex h-10 w-3.5 shrink-0 items-center gap-1 pl-px">
    <span className="h-full w-px bg-[#808080]" />
    <span className="h-full border-l-2 border-dotted border-[#b0b0b0]" />
  </span>
);

const Caret = ({ className }: { className: string }) => (
  <span className={`flex shrink-0 justify-center ${className}`}>
    <svg width="10" height="6" viewBox="0 0 10 6"><path d="M0 0h10L5 6Z" /></svg>
  </span>
);

const G = '#12b53a';
const L = '#bfe6fb';

const Toolbar = () => (
  <div className="flex h-10 items-center border-t border-white text-sm" role="toolbar">
    <button aria-label="Линия" className="flex w-[22px] shrink-0 overflow-hidden">
      <Glyph><path d="M1 15l5-5 6 5 7-7" /><path d="M0 23h19" stroke="#b0b0b0" /></Glyph>
    </button>
    <Caret className="w-[21px]" />
    <button aria-label="Индикаторы" className="flex w-[34px] shrink-0 justify-center">
      <Glyph>
        <path d="M1 1h22v17H1Z" fill="#fff" /><path d="M3 18h18v2q-3 3-5 3H8q-2 0-5-3Z" fill={L} />
        <path d="M4 10l4-4 3 3 7-5" /><path d="M5 16v-2m3 2v-3m3 3v-2m3 2v-3m3 3v-5" stroke={G} />
      </Glyph>
    </button>
    <Caret className="w-[17px]" />
    <ToolButton label="Счёт">
      <Glyph><rect x="1" y="1" width="21" height="21" rx="2" fill="#fcc800" stroke="#d09000" /><path d="M15 8q-1-2-3.500-2T8 8.500q0 2 3.500 2.800T15 14.500q0 2.500-3.500 2.500T8 15M11.500 4v15" stroke="#b07800" /></Glyph>
    </ToolButton>
    <Sep />
    <ToolButton label="IDE"><span className="text-base">IDE</span></ToolButton>
    <ToolButton label="Маркет">
      <Glyph><path d="M4 6h16l2 17H2Z" fill="#fcc800" stroke="#d09000" /><path d="M8 10V4q0-3 4-3t4 3v6" stroke="#d09000" /><path d="M17 8l1 14" stroke="#d09000" /></Glyph>
    </ToolButton>
    <ToolButton label="Сигналы">
      <Glyph><circle cx="12" cy="12" r="2.500" fill={L} /><path d="M7 7q-4 5 0 10M17 7q4 5 0 10M3.500 4.500q-5 7.500 0 15M20.500 4.500q5 7.500 0 15" /></Glyph>
    </ToolButton>
    <ToolButton label="VPS">
      <Glyph><path d="M6 16q-4 0-4-3.500T6 9q1-6 6-6t6 5q4 0 4 4t-4 4Z" fill={L} /><path d="M12 16v5M1 21h22" /><circle cx="12" cy="21" r="1.500" fill="#fff" /></Glyph>
    </ToolButton>
    <ToolButton label="Отпечаток">
      <Glyph><path d="M2 15q-2-6 2-10t10-4 8 8M5 19q-2-4-1-8t7-6 7 4M9 20q-3-4-2-8t5-4 4 3M11 17q-2-3-1-5t3-1" /><circle cx="17" cy="17" r="5.500" fill="#e2fbe6" stroke={G} /><path d="M17 14v6m-3-3h6" stroke={G} /></Glyph>
    </ToolButton>
    <Sep />
    <button className="mx-px flex h-9 w-[139px] shrink-0 items-center gap-2.5 border border-[#5f9fdc] bg-[#b3d4f3] pl-2">
      <svg width="16" height="18" viewBox="0 0 16 18" fill="#e2fbe6" stroke={G} strokeWidth="1.500"><path d="M2 2l12 7-12 7Z" /></svg>
      Алготрейдинг
    </button>
    <button className="flex h-9 w-[137px] shrink-0 items-center gap-2 pl-2">
      <svg width="18" height="24" viewBox="0 0 18 24" fill="#fff" stroke="#0a64a4" strokeWidth="1.500"><path d="M1 3q0-2 2-2h11q2 0 2 2v14l-5 5H3q-2 0-2-2Z" /><path d="M16 16h-5v6Z" fill="#0a64a4" /><path d="M8.500 6v8m-4-4h8" /></svg>
      <span className="whitespace-nowrap">Новый ордер</span>
    </button>
    <Sep />
    <ToolButton label="Бары" active><Glyph><path d="M7 7v15M7 10h4M3 20h4M17 1v18M13 4h4M17 14h4" stroke={G} /></Glyph></ToolButton>
    <ToolButton label="Свечи"><Glyph><path d="M7 0v24M17 0v24" stroke={G} /><path d="M4.500 4h5v15h-5ZM14.500 4h5v15h-5Z" fill="#e2fbe6" stroke={G} /></Glyph></ToolButton>
    <ToolButton label="Линия" faint><Glyph><path d="M1 15h4l4-8 4 11 5-13 4 9h2" stroke={G} /></Glyph></ToolButton>
    <Sep />
    <ToolButton label="Увеличить"><Glyph><circle cx="9.500" cy="9.500" r="8" fill={L} /><path d="M15.500 15.500l7 7M9.500 6v7M6 9.500h7" /></Glyph></ToolButton>
    <ToolButton label="Уменьшить"><Glyph><circle cx="9.500" cy="9.500" r="8" fill={L} /><path d="M15.500 15.500l7 7M6 9.500h7" /></Glyph></ToolButton>
    <ToolButton label="Плитка"><Glyph><rect x="1.500" y="1.500" width="21" height="21" rx="2" fill={L} /><path d="M12 1.500v21M1.500 12h21" /></Glyph></ToolButton>
    <Sep />
    <ToolButton label="Прокрутка"><Glyph><path d="M3 3v15M8 1v17" stroke={G} /><path d="M1 6h3v9H1ZM6.500 4h3v11h-3Z" fill="#e2fbe6" stroke={G} /><path d="M12 10h8m-4-4l4 4-4 4" stroke={G} /><path d="M23 1v18" strokeWidth="2" /><path d="M1 23h22" stroke="#a0a0a0" /></Glyph></ToolButton>
    <ToolButton label="Сдвиг" active><Glyph><path d="M3 3v15M8 1v17" stroke={G} /><path d="M1 6h3v9H1ZM6.500 4h3v11h-3Z" fill="#e2fbe6" stroke={G} /><path d="M12 1v18" /><path d="M23 10h-8m4-4l-4 4 4 4" /><path d="M1 23h22" stroke="#a0a0a0" /></Glyph></ToolButton>
    <Sep />
    <ToolButton label="Снимок"><Glyph><path d="M5 23H1V1h22v7" strokeDasharray="3 2" /><path d="M7 13h3l2-3h5l2 3h4v10H7Z" fill={L} /><circle cx="15" cy="17.500" r="2.500" /></Glyph></ToolButton>
    <Grip />
    <ToolButton label="Курсор" active><Glyph><path d="M4 3l15 7-6 2 5 7-2 2-6-7-3 5Z" fill={L} /></Glyph></ToolButton>
    <ToolButton label="Перекрестие"><Glyph><path d="M12 1v8m0 6v8M1 12h8m6 0h8" strokeWidth="2" /><circle cx="12" cy="12" r="2" /></Glyph></ToolButton>
    <Sep />
    <ToolButton label="Вертикальная линия"><Glyph><path d="M12 1v8m0 6v8" /><circle cx="12" cy="12" r="2.500" fill={L} /></Glyph></ToolButton>
    <ToolButton label="Горизонтальная линия"><Glyph><path d="M0 12h9m6 0h9" /><circle cx="12" cy="12" r="2.500" fill={L} /></Glyph></ToolButton>
    <ToolButton label="Трендовая линия"><Glyph><path d="M5 19L19 5" /><circle cx="3.500" cy="20.500" r="2.500" fill={L} /><circle cx="20.500" cy="3.500" r="2.500" fill={L} /></Glyph></ToolButton>
    <ToolButton label="Канал"><Glyph><path d="M5 12l7-7M13 19l10-11" /><circle cx="3.500" cy="14" r="2.500" fill={L} /><circle cx="13.500" cy="3.500" r="2.500" fill={L} /><circle cx="11" cy="21" r="2.500" fill={L} /></Glyph></ToolButton>
    <ToolButton label="Фибоначчи"><Glyph><path d="M1 2h22M1 9h16M6 15h17M1 22h22" /><circle cx="20" cy="9" r="2.500" fill={L} /><circle cx="3.500" cy="19" r="2.500" fill={L} /></Glyph></ToolButton>
    <ToolButton label="Стрелка"><Glyph><path d="M5 19L18 6M10 6h8v8" /><circle cx="3.500" cy="20.500" r="2.500" fill={L} /><circle cx="20.500" cy="3.500" r="2.500" fill={L} /></Glyph></ToolButton>
    <ToolButton label="Текст"><Glyph><path d="M4 4h16M12 4v17" strokeWidth="2" /></Glyph></ToolButton>
    <Grip />
    {['M1', 'M5', 'M10', 'M30', 'H1', 'D1', 'W1', 'MN'].map((t) => (
      <ToolButton key={t} label={t} active={t === 'M1'}>{t}</ToolButton>
    ))}
    <button aria-label="Поиск" className="ml-2 flex w-[39px] shrink-0 justify-center">
      <svg width="18" height="18" viewBox="0 0 18 18" fill="none" stroke="#1a1a1a" strokeWidth="1.700"><circle cx="8" cy="8" r="6.500" /><path d="M12.500 13l4 4.500" /></svg>
    </button>
    <button aria-label="Аккаунт" className="relative flex w-[39px] shrink-0 justify-center">
      <svg width="18" height="18" viewBox="0 0 18 18" fill="none" stroke="#1a1a1a" strokeWidth="1.500"><circle cx="9" cy="9" r="8" /><circle cx="9" cy="7" r="3" /><path d="M3.500 14.500q5.500-5 11 0" /></svg>
      <span className="absolute -top-1.5 left-5 flex h-5 w-5 items-center justify-center rounded-full bg-[#e03a22] text-base leading-none text-white">1</span>
    </button>
    <div className="ml-auto flex shrink-0 items-center gap-3 pr-2">
      <div className="flex flex-col items-center text-[10px] leading-none font-bold text-[#12b53a]">
        <svg width="12" height="12" viewBox="0 0 12 12" fill="#e2fbe6" stroke={G} strokeWidth="1.500"><path d="M6 1l4.500 5H8v2H4V6H1.500ZM4 11h4" /></svg>
        LVL
      </div>
      <div className="h-5 w-14 border-2 border-[#808080] bg-white"><div className="h-full w-1/2 bg-[#40e040]" /></div>
    </div>
  </div>
);

/* ---------- left side ---------- */

const treeIcons: { expand: '+' | '-' | ''; icon: React.ReactNode }[] = [
  { expand: '-', icon: <><circle cx="7" cy="8" r="4" fill={L} /><circle cx="15" cy="6" r="4.500" fill={L} /><path d="M1 20q0-6 6-6M8 21q0-8 7-8t7 8Z" fill={L} /></> },
  { expand: '+', icon: <><path d="M1 17q5 2 7-5t5-5 3 8 6-8" /><path d="M1 16l6-3 6 1 9-8" stroke={G} /></> },
  { expand: '+', icon: <><path d="M6 10v8q6 4 12 0v-8" fill={L} /><path d="M1 9l11-5 11 5-11 5Z" fill={L} /><path d="M4 11v9" /></> },
  { expand: '+', icon: <path d="M6 4h15v15H6l-3-3h4Z" fill="#fcc800" stroke="#d09000" /> },
  { expand: '', icon: <><path d="M12 2l3 4 5-1v5l3 2-3 3v5l-5-1-3 4-3-4-5 1v-5l-3-3 3-2V5l5 1Z" fill={L} /><path d="M10 9l5 3-5 3Z" fill="#fff" /></> },
  { expand: '+', icon: <><path d="M4 8h16l1 14H3Z" fill="#fcc800" stroke="#d09000" /><path d="M8 10V6q0-4 4-4t4 4v4" stroke="#d09000" /></> },
  { expand: '+', icon: <><circle cx="12" cy="12" r="2" fill={L} /><path d="M7 8q-3 4 0 8M17 8q3 4 0 8M3.500 5q-4 7 0 14M20.500 5q4 7 0 14" /></> },
  { expand: '+', icon: <><path d="M6 15q-4 0-4-3.500T6 8q1-5 6-5t6 4q4 0 4 4t-4 4Z" fill={L} /><path d="M12 15v5M3 20h18" /></> },
];

const Box = ({ sign, className = '' }: { sign: string; className?: string }) => (
  <svg width="11" height="11" viewBox="0 0 11 11" className={`shrink-0 ${className}`} fill="#fff" stroke="#909090">
    <path d="M.5 .5h10v10H.5Z" />
    <path d={sign === '+' ? 'M2.500 5.500h6M5.500 2.500v6' : 'M2.500 5.500h6'} stroke="#3a50a0" />
  </svg>
);

const TreeRow = ({ expand, icon }: { expand: string; icon: React.ReactNode }) => (
  <li className="flex h-6 items-center">
    <span className="flex w-[17px] items-center overflow-hidden">
      {expand && <Box sign={expand} className="-ml-1.5" />}
      <span className="flex-1 border-t border-dotted border-[#808080]" />
    </span>
    <Glyph size={20}>{icon}</Glyph>
  </li>
);

const CloseX = () => (
  <button aria-label="Закрыть панель" className="pr-1">
    <svg width="9" height="9" viewBox="0 0 9 9" stroke="#000" strokeWidth="1.500"><path d="M1 1l7 7M8 1L1 8" /></svg>
  </button>
);

const SidePanels = () => (
  <aside className="flex w-[51px] shrink-0 flex-col overflow-hidden pr-1.5 text-sm">
    <header className="mt-1 flex h-[17px] items-center justify-between">
      <span className="flex w-[26px] justify-end overflow-hidden bg-[#c8dcf0] leading-4">авиг</span>
      <CloseX />
    </header>
    <div className="h-[456px] overflow-hidden border-t border-[#a0a0a0] bg-white">
      <div className="flex h-6 items-center gap-1.5 overflow-hidden">
        <svg width="10" height="18" viewBox="0 0 10 18" className="shrink-0"><path d="M0 3l5-3 4 2v6l-2-1V4L0 8Z" fill="#fcc800" /><path d="M0 9l5-3v9l-5 3Z" fill="#12a83a" /></svg>
        AMP
      </div>
      <ul>
        <TreeRow {...treeIcons[0]} />
        <li className="flex h-6 items-center pl-[21px]"><Box sign="-" /><span className="w-2 border-t border-dotted border-[#808080]" /></li>
        <li className="ml-[26px] h-6 border-l border-dotted border-[#808080]" />
        <li className="flex h-6 items-center pl-[21px]"><Box sign="+" /><span className="w-2 border-t border-dotted border-[#808080]" /></li>
        {treeIcons.slice(1).map((row, i) => <TreeRow key={i} {...row} />)}
      </ul>
    </div>
    <div className="h-[21px] w-[44px] overflow-hidden border-b border-black bg-white pl-px whitespace-nowrap">Общие</div>
    <header className="mt-2.5 flex h-[19px] items-center justify-between">
      <span className="flex w-[26px] justify-end overflow-hidden bg-[#c8dcf0] leading-4">Обзор</span>
      <CloseX />
    </header>
    <div className="flex h-[150px] border-t border-[#a0a0a0] bg-white">
      <ul className="w-[23px] text-right">
        {[0, 1, 2, 3, 4, 5].map((r) => (
          <li key={r} className={`h-[25px] border-b border-[#c8c8c8] ${r === 2 || r === 4 ? 'bg-[#ebebeb]' : ''} ${r === 1 ? 'text-left leading-6 text-red-600' : ''}`}>
            {r === 1 ? <span className="block w-0.5 overflow-hidden">и</span> : null}
          </li>
        ))}
      </ul>
      <div className="flex flex-1 flex-col items-center bg-[#f0f0f0]">
        <svg width="10" height="20" viewBox="0 0 10 20" fill="none" stroke="#606060" strokeWidth="2"><path d="M1 13l4-4 4 4" /></svg>
        <span className="h-6 w-[19px] bg-[#cdcdcd]" />
        <svg width="10" height="20" viewBox="0 0 10 20" className="mt-auto" fill="none" stroke="#606060" strokeWidth="2"><path d="M1 7l4 4 4-4" /></svg>
      </div>
    </div>
    <div className="h-6 w-[44px] overflow-hidden border-b border-black bg-white pl-px whitespace-nowrap">Символы</div>
  </aside>
);

/* ---------- trade history ---------- */

const columns: [string, string][] = [
  ['Время', 'w-[185px]'], ['Символ', 'w-[128px]'], ['Тикет', 'w-[100px]'], ['Тип', 'w-[84px]'], ['Объем', 'w-[142px]'],
  ['Цена', 'w-[142px]'], ['S / L', 'w-[142px]'], ['T / P', 'w-[142px]'], ['Время', 'w-[176px]'], ['Цена', 'w-[141px]'],
  ['Комиссия', 'w-[142px]'], ['Прибыль', 'w-[212px]'], ['ID эксперта', 'w-[151px]'],
];

const deals = [
  ['2022.02.23 07:48:48', 'm2kh22', '174673706', 'buy', '1', '1996.6', '1993.5', '1997.6', '2022.02.23 07:51:09', '1997.6', '-0.94', '5.00', ''],
  ['2022.02.23 07:56:59', 'mesh22', '174673942', 'buy', '1', '4321.25', '4317.25', '4323.75', '2022.02.23 07:58:02', '4323.75', '-0.94', '12.50', ''],
  ['2022.02.23 08:47:42', 'dsxh22', '174678698', 'buy', '1', '4015.5', '4003.0', '4021.0', '2022.02.23 08:49:19', '4021.0', '-2.20', '62.40', ''],
];

const totals = ['Прибыль: 75.82', 'Кредит: 0.00', 'Пополнение: 0.00', 'Снятие: 0.00', 'Баланс: 75.82'];

const History = () => (
  <section className="mt-1.5 mr-[7px] border-t-2 border-l border-[#a0a0a0] bg-white">
    <table className="w-full table-fixed border-collapse text-right text-sm">
      <thead className="bg-[#fcfcfc]">
        <tr className="h-6">
          {columns.map(([name, w], i) => (
            <th key={i} scope="col" className={`border-r border-b border-[#e2edf8] px-1.5 py-0 font-normal ${w} ${i === 0 ? 'text-left' : ''}`}>
              {name}
              {i === 0 && <svg width="8" height="5" viewBox="0 0 8 5" className="ml-5 inline-block align-middle"><path d="M4 0l4 5H0Z" /></svg>}
            </th>
          ))}
        </tr>
      </thead>
      <tbody>
        {deals.map((row, r) => (
          <tr key={row[2]} className={`h-[25px] ${r === 1 ? 'bg-[#ebebeb]' : ''}`}>
            {row.map((cell, c) => (
              <td
                key={c}
                className={`border-r border-b border-[#c8c8c8] py-0 ${c === 0 ? 'pl-1' : 'px-1'} ${c === 7 ? 'border-b-[#60f260] bg-[#60f260]' : ''} ${c === 11 ? 'text-[#0000ff]' : ''}`}
              >
                {c === 0 ? (
                  <span className="flex items-center gap-2">
                    <svg width="15" height="20" viewBox="0 0 15 20" fill="#fff" stroke="#0a64a4" strokeWidth="1.500"><rect x="1.500" y="1" width="12" height="18" rx="2" /><path d="M5.500 6h4M5.500 10h4" /></svg>
                    {cell}
                  </span>
                ) : cell}
              </td>
            ))}
          </tr>
        ))}
      </tbody>
      <tfoot className="bg-[#c8c8c8] font-bold">
        <tr className="h-[26px]">
          <td colSpan={10} className="py-0 pl-1 text-left">
            <span className="flex items-center gap-2">
              <svg width="15" height="15" viewBox="0 0 15 15" fill="none" stroke="#333"><circle cx="7.500" cy="7.500" r="6.500" /><path d="M7.500 4v7M4 7.500h7" /></svg>
              <span className="flex gap-2.5">
                {totals.map((t) => <span key={t}>{t}</span>)}
              </span>
            </span>
          </td>
          <td className="px-1 py-0">-4.08</td>
          <td className="px-1 py-0">79.90</td>
          <td />
        </tr>
      </tfoot>
    </table>
    <div className="flex h-[23px] pt-3.5">
      <div className="flex w-[170px] border-t-2 border-r border-black bg-[#f0f0f0]"><span className="mt-1 ml-[92px] w-px bg-[#808080]" /></div>
      <div className="w-[82px]" />
      <div className="flex flex-1 border-t-2 border-l border-black bg-[#f0f0f0]">
        {['w-[85px]', 'w-[77px]', 'w-[100px]', 'w-[97px]', 'w-[77px]', 'w-[81px]', 'w-[107px]', 'w-[91px]'].map((w, i) => (
          <span key={i} className={`mt-1 border-r border-[#808080] ${w}`} />
        ))}
      </div>
    </div>
  </section>
);

const menu: [string, string][] = [
  ['Файл', 'w-[60px] -ml-1.5'], ['Вид', 'w-[53px]'], ['Вставка', 'w-[79px]'], ['Графики', 'w-[84px]'], ['Сервис', 'w-[76px]'], ['Окно', 'w-[62px]'], ['Справка', 'w-[80px]'],
];

export default function App() {
  return (
    <div className="flex h-screen flex-col overflow-hidden bg-[#f0f0f0] pr-1.5 font-['Open_Sans','Noto_Sans',sans-serif] text-black">
      <nav className="flex h-[26px] shrink-0 items-center border-b border-[#a0a0a0] text-sm">
        {menu.map(([name, w]) => (
          <button key={name} className={`shrink-0 text-left ${w}`}>{name}</button>
        ))}
      </nav>
      <Toolbar />

      <div className="flex shrink-0">
        <SidePanels />
        <main className="min-w-0 flex-1 border-l border-[#a0a0a0]">
          <div className="flex h-[683px] items-start overflow-hidden border-t-2 border-l-2 border-b border-[#696969] border-b-[#e0e0e0] bg-[#f5f5f5] pr-[3px]">
            <ChartWindow title="M2KH22,M1" frame="flex-[618_1_0%] border-b-2 border-[#696969] pb-1.5" titleBar="pl-3 pr-2" body="ml-1.5 mr-1" panel="left-[450px]">
              <M2kChart />
            </ChartWindow>
            <ChartWindow title="DSXH22,M1" frame="flex-[602_1_0%] border-l border-[#696969]" titleBar="pl-1" body="ml-px mr-px" panel="left-[446px]">
              <DsxChart />
            </ChartWindow>
            <ChartWindow title="MESH22,M1" frame="flex-[616_1_0%] border-l border-r-2 border-[#696969]" titleBar="pl-3 pr-2" body="ml-1.5 mr-1.5" panel="left-[440px]">
              <MesChart />
            </ChartWindow>
          </div>
          <div className="mt-0.5 flex h-6 items-stretch border-t-2 border-black text-sm text-[#808080]">
            {['MYMH22,M1', 'MNQH22,M1', 'M2KH22,M1', 'DSXH22,M1'].map((t, i) => (
              <button key={t} className={`my-1 flex items-center justify-center ${['w-[115px]', 'w-[117px]', 'w-[109px]', 'w-[110px]'][i]} ${i < 3 ? 'border-r border-[#808080]' : ''}`}>{t}</button>
            ))}
            <button className="-mt-0.5 w-[108px] border-2 border-t-0 border-black bg-white text-black">MESH22,M1</button>
            <svg width="34" height="10" viewBox="0 0 34 10" className="mr-3 ml-auto self-center" fill="#b4b4b4"><path d="M6 0v10L1 5ZM28 0v10l5-5Z" /></svg>
          </div>
        </main>
      </div>

      <History />
    </div>
  );
}
